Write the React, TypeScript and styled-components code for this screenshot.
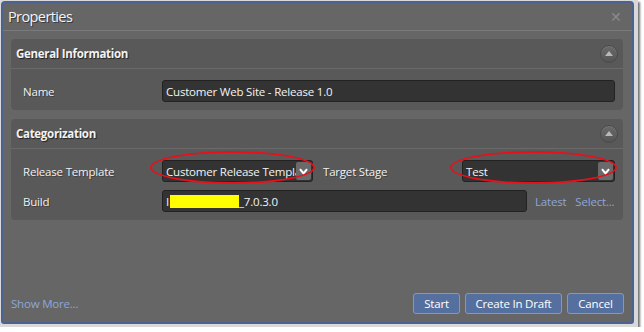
import React from 'react'
import styled, {createGlobalStyle} from 'styled-components'

const GlobalStyle = createGlobalStyle`
  html, body {
    margin: 0;
    padding: 0;
    background: #ffffff;
  }

  body {
    font-family: "Open Sans", "Noto Sans", sans-serif;
  }
`

const Frame = styled.div`
  width: 638px;
  height: 327px;
  padding: 1px 4px 3px 1px;
  background: #d9d9d9;
  box-shadow: 2px 2px 2px rgba(0, 0, 0, 0.55);
  box-sizing: border-box;
`

const Dialog = styled.div`
  width: 100%;
  height: 100%;
  box-sizing: border-box;
  border: 2px solid #4b6292;
  border-radius: 4px 4px 3px 3px;
  background: #666666;
  display: flex;
  flex-direction: column;
`

const TitleBar = styled.div`
  height: 27px;
  display: flex;
  align-items: center;
  justify-content: space-between;
  padding: 0 10px 0 5px;
  border-bottom: 1px solid #7a7a7a;
`

const Title = styled.div`
  font-size: 14.5px;
  letter-spacing: -0.6px;
  color: #f4f4f4;
  text-shadow: 1px 1px 0 #3a3a3a;
`

const Close = styled.div`
  font-size: 14px;
  color: #8a8a8a;
  line-height: 1;
`

const Body = styled.div`
  flex: 1;
  padding: 8px 9px 0 8px;
  display: flex;
  flex-direction: column;
  gap: 9px;
`

const Panel = styled.div`
  background: #595959;
  border-radius: 4px;
  display: flex;
  flex-direction: column;
`

const PanelHeader = styled.div`
  height: 29px;
  display: flex;
  align-items: center;
  justify-content: space-between;
  padding: 0 5px 0 5px;
  border-bottom: 1px solid #6a6a6a;
`

const PanelTitle = styled.div`
  font-size: 11.5px;
  font-weight: 700;
  letter-spacing: -0.3px;
  color: #f2f2f2;
  text-shadow: 1px 1px 1px #222;
`

const Collapse = styled.div`
  width: 16px;
  height: 16px;
  border-radius: 50%;
  border: 1px solid #4a4a4a;
  box-shadow: inset 0 1px 0 #777777;
  background: linear-gradient(#6a6a6a, #555555);
  display: flex;
  align-items: center;
  justify-content: center;

  &::after {
    content: '';
    border-left: 4px solid transparent;
    border-right: 4px solid transparent;
    border-bottom: 5px solid #b8b8b8;
    margin-top: -1px;
  }
`

const Rows = styled.div`
  display: grid;
  grid-template-columns: 129px 151px 129px 1fr;
  column-gap: 10px;
  row-gap: 8px;
  align-items: center;
  padding: 11px 8px 8px 12px;
`

const Label = styled.div`
  font-size: 11.5px;
  letter-spacing: -0.2px;
  color: #f0f0f0;
  text-shadow: 1px 1px 0 #404040;
`

const Field = styled.div<{$span?: string}>`
  grid-column: ${p => p.$span || 'auto'};
  height: 22px;
  box-sizing: border-box;
  background: #333333;
  border: 1px solid #222222;
  border-radius: 3px;
  display: flex;
  align-items: center;
  padding-left: 3px;
  font-size: 11.5px;
  letter-spacing: -0.2px;
  color: #f4f4f4;
  white-space: nowrap;
  overflow: hidden;
  position: relative;
`

const SelectWrap = styled.div`
  position: relative;
`

const SelectBox = styled(Field)`
  padding-right: 18px;
`

const Arrow = styled.div`
  position: absolute;
  top: 1px;
  right: 1px;
  bottom: 1px;
  width: 15px;
  border-radius: 2px;
  background: #6a6a6a;
  display: flex;
  align-items: center;
  justify-content: center;
`

const Marker = styled.div`
  position: absolute;
  top: -9px;
  bottom: -2px;
  left: -12px;
  right: -2px;
  border: 2px solid #e8101a;
  border-radius: 50%;
  pointer-events: none;
`

const BuildRow = styled.div`
  grid-column: 2 / -1;
  display: flex;
  align-items: center;
  gap: 8px;
`

const BuildField = styled(Field)`
  flex: 1;
`

const Redact = styled.span`
  display: inline-block;
  width: 69px;
  height: 13px;
  background: #ffff00;
  margin-left: 1px;
`

const LinkText = styled.span`
  font-size: 11.5px;
  letter-spacing: -0.2px;
  color: #8ea6d8;
`

const Links = styled.div`
  display: flex;
  gap: 9px;
  width: 80px;
`

const Footer = styled.div`
  display: flex;
  align-items: center;
  justify-content: space-between;
  padding: 0 8px 8px 8px;
`

const Buttons = styled.div`
  display: flex;
  gap: 5px;
`

const Button = styled.div<{$w: number}>`
  width: ${p => p.$w}px;
  height: 21px;
  box-sizing: border-box;
  background: #55709f;
  border: 1px solid #8797b8;
  border-radius: 3px;
  color: #ffffff;
  font-size: 11.5px;
  letter-spacing: -0.2px;
  display: flex;
  align-items: center;
  justify-content: center;
`

const Chevron = () => (
    <svg width="9" height="7" viewBox="0 0 9 7">
        <path d="M1 1.2 L4.5 5.5 L8 1.2" fill="none" stroke="#ffffff" strokeWidth="2"/>
    </svg>
)

const Select: React.FC<{value: string, marked?: boolean}> = ({value, marked}) => (
    <SelectWrap>
        <SelectBox>
            {value}
            <Arrow><Chevron/></Arrow>
        </SelectBox>
        {marked && <Marker/>}
    </SelectWrap>
)

const App: React.FC = () => {
    return (
        <>
            <GlobalStyle/>
            <Frame>
                <Dialog>
                    <TitleBar>
                        <Title>Properties</Title>
                        <Close>✕</Close>
                    </TitleBar>
                    <Body>
                        <Panel>
                            <PanelHeader>
                                <PanelTitle>General Information</PanelTitle>
                                <Collapse/>
                            </PanelHeader>
                            <Rows>
                                <Label>Name</Label>
                                <Field $span="2 / -1">Customer Web Site - Release 1.0</Field>
                            </Rows>
                        </Panel>
                        <Panel>
                            <PanelHeader>
                                <PanelTitle>Categorization</PanelTitle>
                                <Collapse/>
                            </PanelHeader>
                            <Rows>
                                <Label>Release Template</Label>
                                <Select value="Customer Release Template" marked/>
                                <Label>Target Stage</Label>
                                <Select value="Test" marked/>
                                <Label>Build</Label>
                                <BuildRow>
                                    <BuildField>I<Redact/>_7.0.3.0</BuildField>
                                    <Links>
                                        <LinkText>Latest</LinkText>
                                        <LinkText>Select...</LinkText>
                                    </Links>
                                </BuildRow>
                            </Rows>
                        </Panel>
                    </Body>
                    <Footer>
                        <LinkText>Show More...</LinkText>
                        <Buttons>
                            <Button $w={47}>Start</Button>
                            <Button $w={97}>Create In Draft</Button>
                            <Button $w={57}>Cancel</Button>
                        </Buttons>
                    </Footer>
                </Dialog>
            </Frame>
        </>
    )
}

export default App
